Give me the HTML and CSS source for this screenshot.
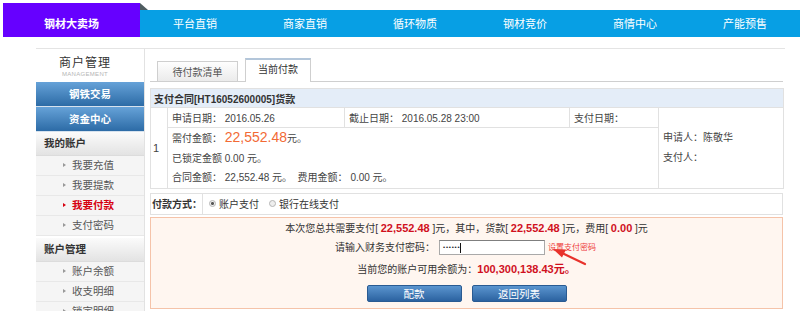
FILE: index.html
```html
<!DOCTYPE html>
<html lang="zh-CN">
<head>
<meta charset="utf-8">
<title>当前付款</title>
<link rel="stylesheet" href="styles.css">
</head>
<body>
<header class="topbar">
  <div class="brand">钢材大卖场</div>
  <nav class="nav">
    <a class="nav-item">平台直销</a>
    <a class="nav-item">商家直销</a>
    <a class="nav-item">循环物质</a>
    <a class="nav-item">钢材竞价</a>
    <a class="nav-item">商情中心</a>
    <a class="nav-item">产能预售</a>
  </nav>
</header>
<div class="wrap">
  <aside class="side">
    <div class="side-title">
      <div class="side-cn">商户管理</div>
      <div class="side-en">MANAGEMENT</div>
    </div>
    <a class="side-btn">钢铁交易</a>
    <a class="side-btn">资金中心</a>
    <div class="side-head">我的账户</div>
    <ul class="side-list">
      <li>我要充值</li>
      <li>我要提款</li>
      <li class="on">我要付款</li>
      <li>支付密码</li>
    </ul>
    <div class="side-head second">账户管理</div>
    <ul class="side-list">
      <li>账户余额</li>
      <li>收支明细</li>
      <li>锁定明细</li>
    </ul>
  </aside>
  <main class="main">
    <div class="tabs">
      <span class="tab">待付款清单</span>
      <span class="tab active">当前付款</span>
    </div>
    <table class="contract">
      <colgroup>
        <col class="c1"><col class="c2"><col class="c3"><col class="c4"><col class="c5">
      </colgroup>
      <tr class="r-head"><th colspan="5">支付合同[HT16052600005]货款</th></tr>
      <tr class="r1">
        <td rowspan="2" class="num">1</td>
        <td>申请日期：&nbsp;2016.05.26</td>
        <td>截止日期：&nbsp;2016.05.28 23:00</td>
        <td>支付日期：</td>
        <td rowspan="2" class="people">申请人：陈敬华<br>支付人：</td>
      </tr>
      <tr class="r2">
        <td colspan="3" class="amounts">
          <div>需付金额：&nbsp;<span class="big">22,552.48</span>元。</div>
          <div>已锁定金额 0.00 元。</div>
          <div>合同金额：&nbsp;22,552.48 元。&nbsp;&nbsp;费用金额：&nbsp;0.00 元。</div>
        </td>
      </tr>
    </table>
    <div class="paymethod">
      <span class="pm-label">付款方式：</span>
      <span class="radio checked"></span><span class="pm-opt">账户支付</span>
      <span class="radio"></span><span class="pm-opt">银行在线支付</span>
    </div>
    <div class="paybox">
      <div class="pb-line">本次您总共需要支付[ <b class="red">22,552.48</b> ]元，其中，货款[ <b class="red">22,552.48</b> ]元，费用[ <b class="red">0.00</b> ]元</div>
      <div class="pb-line pwd">
        <span>请输入财务支付密码：</span>
        <span class="pwd-input"><span class="dots">••••••</span><span class="caret"></span></span>
        <a class="setpwd">设置支付密码</a>
        <svg class="arrow" width="40" height="24" viewBox="0 0 40 24">
          <line x1="11" y1="8" x2="34" y2="19" stroke="#e8322c" stroke-width="2.2" stroke-linecap="round"/>
          <polygon points="2,4 15,4.5 11,12.5" fill="#e8322c"/>
        </svg>
      </div>
      <div class="pb-line bal">当前您的账户可用余额为：<b class="red">100,300,138.43元。</b></div>
      <div class="pb-btns">
        <a class="btn">配款</a>
        <a class="btn">返回列表</a>
      </div>
    </div>
  </main>
</div>
</body>
</html>
```
FILE: styles.css
```css
* { box-sizing: border-box; }
body {
  margin: 0;
  font-family: "Liberation Sans", "Noto Sans CJK SC", sans-serif;
  font-size: 10px;
  color: #333;
  background: #fff;
  overflow: hidden;
}
a { text-decoration: none; }
ul { list-style: none; margin: 0; padding: 0; }

/* top bar */
.topbar {
  display: flex;
  align-items: flex-end;
  height: 37px;
  padding: 3px 0 0 3px;
}
.brand {
  width: 139px;
  height: 34px;
  background: #6600ff;
  color: #fff;
  font-weight: bold;
  font-size: 11px;
  text-align: center;
  line-height: 24px;
  padding-top: 9px;
}
.nav {
  flex: 1;
  height: 27px;
  background: #079fe4;
  display: flex;
  position: relative;
}
.nav::before {
  content: "";
  position: absolute;
  left: 0;
  top: -7px;
  border-left: 8px solid #4f5c60;
  border-top: 7px solid transparent;
}
.nav-item {
  width: 110px;
  text-align: center;
  color: #fff;
  font-size: 11px;
  line-height: 28px;
}

/* layout */
.wrap {
  display: flex;
  margin: 11px 15px 0 36px;
  border-top: 1px solid #e4e4e4;
}
.side {
  width: 109px;
  flex: none;
  border-right: 1px solid #e2e2e2;
  height: 270px;
}
.side-title {
  height: 33px;
  text-align: center;
  padding: 7px 10px 0 0;
}
.side-cn {
  font-size: 12px;
  line-height: 14px;
  letter-spacing: 1px;
  color: #333;
}
.side-en {
  font-size: 6px;
  line-height: 8px;
  color: #b5b5b5;
  letter-spacing: 0.3px;
}
.side-btn {
  display: block;
  height: 25px;
  line-height: 24px;
  text-align: center;
  color: #fff;
  font-weight: bold;
  font-size: 10.5px;
  background: linear-gradient(#66a2d8, #2c6ba6);
  border-bottom: 1px solid #d6e2ee;
}
.side-head {
  height: 24px;
  line-height: 23px;
  padding-left: 8px;
  font-weight: bold;
  font-size: 10.5px;
  color: #333;
  background: linear-gradient(#fbfbfb, #e3e3e3);
  border-bottom: 1px solid #dcdcdc;
}
.side-head.second { margin-top: 2px; }
.side-list li {
  height: 20px;
  line-height: 19px;
  padding-left: 36px;
  position: relative;
  background: #f5f5f5;
  border-bottom: 1px solid #e8e8e8;
  color: #555;
  font-size: 10.5px;
}
.side-list li::before {
  content: "";
  position: absolute;
  left: 27px;
  top: 7px;
  border-left: 3px solid #999;
  border-top: 2.5px solid transparent;
  border-bottom: 2.5px solid transparent;
}
.side-list li.on { color: #d6000f; font-weight: bold; }
.side-list li.on::before { border-left-color: #d6000f; }

/* main */
.main {
  flex: 1;
  min-width: 0;
  padding: 0 2px 0 5px;
}
.tabs {
  display: flex;
  align-items: flex-end;
  gap: 7px;
  padding-left: 7px;
  height: 33px;
  border-bottom: 1px solid #cfcfcf;
}
.tab {
  width: 81px;
  height: 20px;
  border: 1px solid #cfcfcf;
  border-bottom: none;
  background: linear-gradient(#fefefe, #ebebeb);
  text-align: center;
  line-height: 21px;
  color: #555;
}
.tab.active {
  width: 66px;
  height: 24px;
  background: #fff;
  border-top: 2px solid #b3c6da;
  margin-bottom: -1px;
  line-height: 19px;
  color: #333;
}

.contract {
  width: 100%;
  margin-top: 6px;
  border-collapse: collapse;
  table-layout: fixed;
  color: #444;
}
.c1 { width: 17px; }
.c2 { width: 177px; }
.c3 { width: 225px; }
.c4 { width: 89px; }
.c5 { width: 125px; }
.contract th,
.contract td {
  border: 1px solid #e1e1e1;
  padding: 0 4px;
  text-align: left;
  vertical-align: middle;
  white-space: nowrap;
}
.r-head th {
  height: 19px;
  background: #e4edf8;
  font-weight: bold;
  color: #333;
  padding-left: 3px;
}
.r1 td { height: 20px; }
.r2 td { height: 59px; }
.contract td.num { padding: 0 0 0 2px; font-size: 11px; }
.contract td.people { line-height: 20px; padding-left: 4px; }
.amounts div { line-height: 19.5px; }
.big {
  color: #f26a35;
  font-size: 14px;
}

.paymethod {
  margin-top: 4px;
  height: 22px;
  border: 1px solid #e1e1e1;
  display: flex;
  align-items: center;
}
.pm-label {
  flex: none;
  width: 52px;
  height: 100%;
  line-height: 21px;
  padding-left: 1px;
  font-weight: bold;
  white-space: nowrap;
  border-right: 1px solid #e1e1e1;
}
.radio {
  flex: none;
  width: 7px;
  height: 7px;
  border-radius: 50%;
  border: 1px solid #b5b5b5;
  background: #eee;
  margin: 0 3px 0 6px;
}
.radio.checked {
  background: radial-gradient(circle, #555 0 1.3px, #eee 1.6px);
}
.pm-opt { margin-right: 4px; white-space: nowrap; }

.paybox {
  margin-top: 2px;
  height: 92px;
  border: 1px solid #f5c3a9;
  background: #fff6f0;
  text-align: center;
}
.pb-line {
  height: 20px;
  line-height: 20px;
}
.red { color: #d0101e; font-size: 11px; }
.pwd {
  position: relative;
  display: flex;
  justify-content: center;
  align-items: center;
}
.pwd-input {
  width: 106px;
  height: 15px;
  margin-left: 4px;
  border: 1px solid #a9a9a9;
  border-top-color: #7f7f7f;
  background: #fff;
  display: flex;
  align-items: center;
  padding-left: 3px;
  line-height: 13px;
}
.dots { font-size: 6px; letter-spacing: 0.8px; color: #222; }
.caret { width: 1px; height: 10px; background: #111; margin-left: 0; }
.setpwd {
  color: #ee3b3b;
  font-size: 8px;
  margin-left: 3px;
  margin-right: 2px;
}
.arrow {
  position: absolute;
  left: 400px;
  top: 7px;
}
.bal { height: 22px; line-height: 22px; }
.pb-btns {
  margin-top: 5px;
  display: flex;
  justify-content: center;
  gap: 10px;
}
.btn {
  width: 95px;
  height: 17px;
  line-height: 16px;
  color: #fff;
  font-size: 10.5px;
  background: linear-gradient(#5b95cf, #2b62a0);
  border: 1px solid #2a5b92;
  border-radius: 2px;
}
```
